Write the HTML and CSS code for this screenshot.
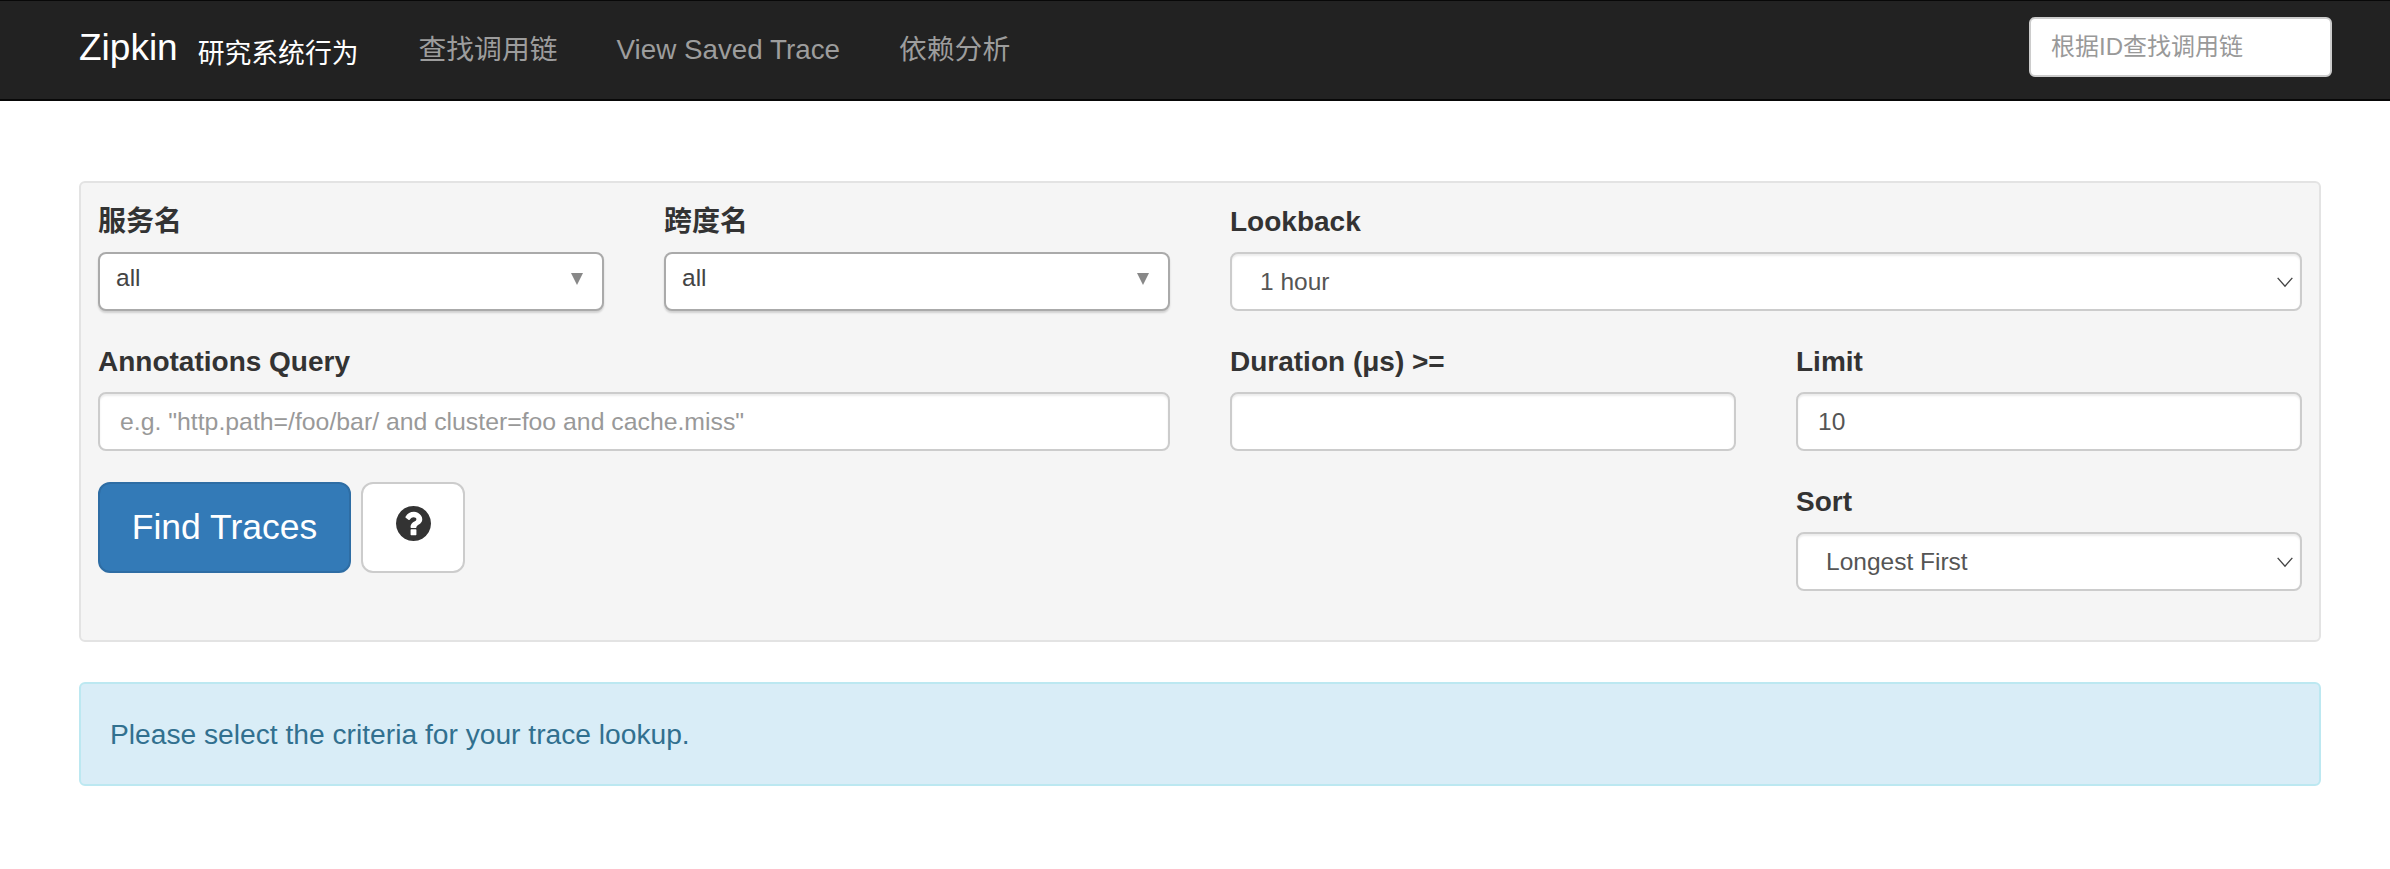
FILE: index.html
```html
<!DOCTYPE html>
<html lang="zh">
<head>
<meta charset="utf-8">
<title>Zipkin</title>
<link rel="stylesheet" href="styles.css">
</head>
<body>
<nav class="navbar">
  <a class="brand">Zipkin<small class="brand-sub">研究系统行为</small></a>
  <ul class="nav-links">
    <li>查找调用链</li>
    <li>View Saved Trace</li>
    <li>依赖分析</li>
  </ul>
  <input class="nav-search" type="text" placeholder="根据ID查找调用链">
</nav>
<main class="container">
  <form class="well">
    <div class="field">
      <label class="label">服务名</label>
      <div class="chosen"><span>all</span><svg class="tri" viewBox="0 0 12 12"><path d="M0 0h12L6 12z"/></svg></div>
    </div>
    <div class="field">
      <label class="label">跨度名</label>
      <div class="chosen"><span>all</span><svg class="tri" viewBox="0 0 12 12"><path d="M0 0h12L6 12z"/></svg></div>
    </div>
    <div class="field span-2">
      <label class="label">Lookback</label>
      <div class="select-wrap">
        <select class="control select"><option>1 hour</option></select>
        <svg class="chev" viewBox="0 0 18 12"><path d="M1 1l8 9 8-9"/></svg>
      </div>
    </div>
    <div class="field span-2">
      <label class="label">Annotations Query</label>
      <input class="control" type="text" placeholder='e.g. "http.path=/foo/bar/ and cluster=foo and cache.miss"'>
    </div>
    <div class="field">
      <label class="label">Duration (μs) &gt;=</label>
      <input class="control" type="text">
    </div>
    <div class="field">
      <label class="label">Limit</label>
      <input class="control" type="text" value="10">
    </div>
    <div class="actions span-3">
      <button class="btn-primary" type="button">Find Traces</button>
      <button class="btn-help" type="button" aria-label="Help">
        <svg class="help-icon" viewBox="0 128 1536 1536"><path d="M896 1376v-192q0-14-9-23t-23-9h-192q-14 0-23 9t-9 23v192q0 14 9 23t23 9h192q14 0 23-9t9-23zm256-672q0-88-55.500-163t-138.500-116-170-41q-243 0-371 213-15 24 8 42l132 100q7 6 19 6 16 0 25-12 53-68 86-92 34-24 86-24 48 0 85.500 26t37.500 59q0 38-20 61t-68 45q-63 28-115.500 86.500t-52.500 125.500v36q0 14 9 23t23 9h192q14 0 23-9t9-23q0-19 21.500-49.500t54.500-49.500q32-18 49-28.500t46-35 44.500-48 28-60.500 12.500-81zm384 192q0 209-103 385.500t-279.500 279.500-385.500 103-385.500-103-279.500-279.500-103-385.500 103-385.500 279.500-279.500 385.500-103 385.500 103 279.500 279.500 103 385.500z"/></svg>
      </button>
    </div>
    <div class="field">
      <label class="label">Sort</label>
      <div class="select-wrap">
        <select class="control select"><option>Longest First</option></select>
        <svg class="chev" viewBox="0 0 18 12"><path d="M1 1l8 9 8-9"/></svg>
      </div>
    </div>
  </form>
  <div class="alert">Please select the criteria for your trace lookup.</div>
</main>
</body>
</html>
```
FILE: styles.css
```css
* { box-sizing: border-box; }
html, body { margin: 0; padding: 0; background: #fff; }
body {
  font-family: "Liberation Sans", "Noto Sans CJK SC", sans-serif;
  font-size: 28px;
  color: #333;
}
.navbar {
  display: flex;
  align-items: center;
  height: 101px;
  padding: 0 58px 0 79px;
  background: #222;
  border-top: 1px solid #080808;
  border-bottom: 2px solid #080808;
}
.brand {
  color: #fff;
  font-size: 37px;
  line-height: 40px;
  white-space: nowrap;
  padding-right: 60px;
  margin-bottom: 1px;
}
.brand-sub {
  font-size: 26.800px;
  margin-left: 20px;
  position: relative;
  top: 3px;
}
.nav-links {
  display: flex;
  align-items: baseline;
  gap: 59px;
  list-style: none;
  margin: 0;
  padding: 0;
  color: #9d9d9d;
  font-size: 27.800px;
  line-height: 40px;
  flex: 1;
}
.nav-search {
  width: 303px;
  height: 60px;
  margin-bottom: 6px;
  padding: 0 20px;
  font: 24px "Liberation Sans", "Noto Sans CJK SC", sans-serif;
  background: #fff;
  border: 2px solid #ccc;
  border-radius: 6px;
  outline: none;
}
.nav-search::placeholder, .control::placeholder { color: #999; opacity: 1; }
.control::placeholder { font-size: 24.800px; }
.container { padding: 80px 69px 0 79px; }
.well {
  display: grid;
  grid-template-columns: repeat(4, 506px);
  column-gap: 60px;
  row-gap: 31px;
  padding: 19px 17px 49px 17px;
  background: #f5f5f5;
  border: 2px solid #e3e3e3;
  border-radius: 6px;
}
.span-2 { grid-column: span 2; }
.span-3 { grid-column: span 3; }
.label {
  display: block;
  height: 50px;
  line-height: 40px;
  font-weight: 700;
}
.control, .chosen {
  display: block;
  width: 100%;
  height: 59px;
  background: #fff;
  border-radius: 8px;
  color: #555;
  font: 24.500px "Liberation Sans", "Noto Sans CJK SC", sans-serif;
}
.control {
  padding: 0 20px;
  border: 2px solid #ccc;
  outline: none;
  box-shadow: inset 0 2px 2px rgba(0,0,0,.075);
}
.select {
  appearance: none;
  -webkit-appearance: none;
  padding: 0 28px;
}
.chosen {
  position: relative;
  display: flex;
  align-items: flex-start;
  padding: 8px 16px 0;
  line-height: 32px;
  color: #444;
  border: 2px solid #aaa;
  box-shadow: 0 2px 2px rgba(0,0,0,.15);
}
.tri {
  position: absolute;
  right: 19px;
  top: 19px;
  width: 12px;
  height: 12px;
  fill: #888;
}
.select-wrap { position: relative; }
.chev {
  position: absolute;
  right: 8px;
  top: 25px;
  width: 18px;
  height: 11px;
  fill: none;
  stroke: #444;
  stroke-width: 1.500;
}
.actions {
  display: flex;
  gap: 10px;
  align-items: flex-start;
}
.btn-primary {
  width: 253px;
  height: 91px;
  padding: 0;
  font: 35.500px "Liberation Sans", sans-serif;
  color: #fff;
  background: #337ab7;
  border: 2px solid #2e6da4;
  border-radius: 12px;
}
.btn-help {
  display: flex;
  justify-content: center;
  width: 104px;
  height: 91px;
  padding: 22px 0 0;
  background: #fff;
  border: 2px solid #ccc;
  border-radius: 12px;
}
.help-icon { width: 35px; height: 35px; fill: #333; }
.alert {
  height: 104px;
  margin-top: 40px;
  padding: 0 29px;
  font-size: 28.200px;
  line-height: 100px;
  color: #31708f;
  background: #d9edf7;
  border: 2px solid #bce8f1;
  border-radius: 6px;
}
```
